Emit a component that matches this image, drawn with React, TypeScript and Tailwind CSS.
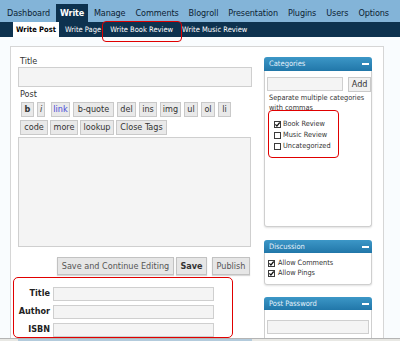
import React from 'react'

const topMenu = ['Dashboard', 'Write', 'Manage', 'Comments', 'Blogroll', 'Presentation', 'Plugins', 'Users', 'Options']
const subMenu = ['Write Post', 'Write Page', 'Write Book Review', 'Write Music Review']

// quicktag buttons with the widths read off the screenshot
const tagsRow1 = [
  { label: 'b', w: 'w-[13px]', cls: 'font-bold' },
  { label: 'i', w: 'w-[8px]', cls: 'italic' },
  { label: 'link', w: 'w-[19px] ml-[3px]', cls: 'text-[#4848d8]' },
  { label: 'b-quote', w: 'w-[41px]', cls: '' },
  { label: 'del', w: 'w-[19px]', cls: '' },
  { label: 'ins', w: 'w-[18px]', cls: '' },
  { label: 'img', w: 'w-[21px]', cls: '' },
  { label: 'ul', w: 'w-[14px]', cls: '' },
  { label: 'ol', w: 'w-[14px]', cls: '' },
  { label: 'li', w: 'w-[13px]', cls: '' },
]
const tagsRow2 = [
  { label: 'code', w: 'w-[28px]' },
  { label: 'more', w: 'w-[28px]' },
  { label: 'lookup', w: 'w-[34px]' },
  { label: 'Close Tags', w: 'w-[51px]' },
]

const Checkbox = ({ checked }: { checked?: boolean }) => (
  <svg width="7" height="7" viewBox="0 0 7 7" className="shrink-0">
    <rect x="0.5" y="0.5" width="6" height="6" fill="#fff" stroke="#3a3a3a" />
    {checked && <path d="M1.4 3.4 L2.9 5.1 L5.7 1.5" fill="none" stroke="#111" strokeWidth="1.3" />}
  </svg>
)

const WidgetHeader = ({ title, h }: { title: string; h: string }) => (
  <div
    className={`${h} rounded-t-[3px] bg-gradient-to-b from-[#3c97c7] to-[#2177a9] flex items-center justify-between pl-[5px] pr-[3px]`}
  >
    <span className="text-[7.5px] text-[#e3f0fa] leading-none">{title}</span>
    <span className="w-[7px] h-[2px] bg-white" />
  </div>
)

export default function App() {
  return (
    <div className="w-[400px] h-[341px] bg-[#f9fcfe] flex flex-col overflow-hidden font-['DejaVu_Sans_Condensed','Liberation_Sans',sans-serif]">
      {/* Top menu */}
      <div className="h-[22px] shrink-0 bg-[#83b4d8] flex items-end pl-[3px] gap-[2px]">
        {topMenu.map((m) =>
          m === 'Write' ? (
            <span key={m} className="h-[18px] px-[4px] bg-[#0d324f] text-white font-bold text-[9px] tracking-[-0.2px] leading-[18px]">
              {m}
            </span>
          ) : (
            <span key={m} className="h-[18px] px-[4px] text-[#0c2233] text-[9px] tracking-[-0.1px] leading-[18px]">
              {m}
            </span>
          )
        )}
      </div>

      {/* Sub menu */}
      <div className="h-[15px] shrink-0 bg-[#0d324f] flex pl-[13px] gap-[3px]">
        {subMenu.map((s) =>
          s === 'Write Post' ? (
            <span key={s} className="px-[3px] bg-white text-black font-bold text-[7.5px] leading-[16px]">
              {s}
            </span>
          ) : (
            <span key={s} className="relative px-[3px] text-white text-[7.5px] leading-[16px]">
              {s}
              {s === 'Write Book Review' && (
                <span className="absolute left-[-5px] right-[-6px] top-[-1px] h-[21px] border border-[#e00000] rounded-[4px]" />
              )}
            </span>
          )
        )}
      </div>

      {/* Main */}
      <div className="flex-1 min-h-0 overflow-hidden pt-[9px] pl-[10px]">
        <div className="w-[374px] min-h-[400px] bg-white border border-[#d6d6d6] flex">
          {/* Post column */}
          <div className="w-[242px] pl-[2px] flex flex-col text-[#333]">
            <div className="ml-[7px] mt-[9px] h-[11px] text-[9px] leading-[11px]">Title</div>
            <div className="ml-[5px] w-[234px] h-[20px] bg-[#f4f4f4] border border-[#cfcfcf]" />
            <div className="ml-[7px] mt-[1px] h-[12px] text-[9px] leading-[12px]">Post</div>
            <div className="ml-[8px] mt-[2px] flex gap-[3px]">
              {tagsRow1.map((t) => (
                <span
                  key={t.label}
                  className={`${t.w} ${t.cls} h-[15px] bg-[#e9e9e9] border border-[#c9c9c9] text-[9px] leading-[13px] text-center`}
                >
                  {t.label}
                </span>
              ))}
            </div>
            <div className="ml-[7px] mt-[3px] flex gap-[2px]">
              {tagsRow2.map((t) => (
                <span
                  key={t.label}
                  className={`${t.w} h-[15px] bg-[#e9e9e9] border border-[#c9c9c9] text-[9px] leading-[13px] text-center`}
                >
                  {t.label}
                </span>
              ))}
            </div>
            <div className="ml-[5px] mt-[2px] w-[233px] h-[110px] bg-[#f4f4f4] border border-[#cfcfcf]" />
            <div className="ml-[5px] mt-[10px] w-[232px] flex justify-end">
              <span className="w-[117px] h-[18px] bg-[#e6e6e6] border border-[#c2c2c2] shadow-[0_1px_1px_rgba(0,0,0,0.15)] text-[9px] leading-[16px] text-center text-[#555]">
                Save and Continue Editing
              </span>
              <span className="ml-[2px] w-[31px] h-[18px] bg-[#e6e6e6] border border-[#c2c2c2] shadow-[0_1px_1px_rgba(0,0,0,0.15)] text-[9px] font-bold leading-[16px] text-center text-[#333]">
                Save
              </span>
              <span className="ml-[5px] w-[38px] h-[18px] bg-[#e6e6e6] border border-[#c2c2c2] shadow-[0_1px_1px_rgba(0,0,0,0.15)] text-[9px] leading-[16px] text-center text-[#555]">
                Publish
              </span>
            </div>

            {/* Custom fields */}
            <div className="mt-[2px] w-[220px] h-[61px] border border-[#e00000] rounded-[5px] pt-[9px] flex flex-col gap-[4px]">
              {['Title', 'Author', 'ISBN'].map((f) => (
                <div key={f} className="flex items-center h-[14px]">
                  <span className="w-[36px] text-right text-[9px] font-bold text-[#222]">{f}</span>
                  <span className="ml-[3px] w-[161px] h-[14px] bg-[#f4f4f4] border border-[#cfcfcf]" />
                </div>
              ))}
            </div>
          </div>

          {/* Sidebar */}
          <div className="ml-[11px] w-[108px] pt-[10px] flex flex-col text-[#333]">
            <WidgetHeader title="Categories" h="h-[14px]" />
            <div className="h-[156px] border border-t-0 border-[#cfcfcf] rounded-b-[3px] shadow-[0_1px_2px_rgba(0,0,0,0.12)] pt-[6px] pl-[2px]">
              <div className="flex">
                <span className="w-[77px] h-[14px] bg-[#f4f4f4] border border-[#cfcfcf]" />
                <span className="ml-[5px] w-[23px] h-[15px] bg-[#f0f0f0] border border-[#c9c9c9] text-[9px] leading-[13px] text-center">
                  Add
                </span>
              </div>
              <div className="ml-[2px] mt-[1px] text-[7.3px] leading-[10px]">
                Separate multiple categories
                <br />
                with commas
              </div>
              <div className="-mt-[3px] ml-[1px] w-[71px] h-[48px] border border-[#e00000] rounded-[4px] pt-[8px] pl-[5px] flex flex-col">
                {[
                  ['Book Review', true],
                  ['Music Review', false],
                  ['Uncategorized', false],
                ].map(([label, c]) => (
                  <div key={label as string} className="h-[11px] flex items-center gap-[2px] text-[7.3px]">
                    <Checkbox checked={c as boolean} />
                    <span>{label as string}</span>
                  </div>
                ))}
              </div>
            </div>

            <div className="mt-[13px]">
              <WidgetHeader title="Discussion" h="h-[13px]" />
              <div className="h-[32px] border border-t-0 border-[#cfcfcf] rounded-b-[3px] shadow-[0_1px_2px_rgba(0,0,0,0.12)] pt-[5px] pl-[3px]">
                {['Allow Comments', 'Allow Pings'].map((l) => (
                  <div key={l} className="h-[10px] flex items-center gap-[3px] text-[7.3px]">
                    <Checkbox checked />
                    <span>{l}</span>
                  </div>
                ))}
              </div>
            </div>

            <div className="mt-[12px]">
              <WidgetHeader title="Post Password" h="h-[13px]" />
              <div className="h-[50px] border border-t-0 border-[#cfcfcf] pt-[10px] pl-[2px]">
                <div className="w-[102px] h-[14px] bg-[#f4f4f4] border border-[#cfcfcf]" />
              </div>
            </div>
          </div>
        </div>
      </div>

      {/* bottom edge */}
      <div className="h-[3px] shrink-0 border-t border-[#b4b4b4] bg-[#e8e8e4]">
        <div className="ml-[18px] w-[234px] h-[2px] bg-[#b3cbdc]" />
      </div>
    </div>
  )
}
